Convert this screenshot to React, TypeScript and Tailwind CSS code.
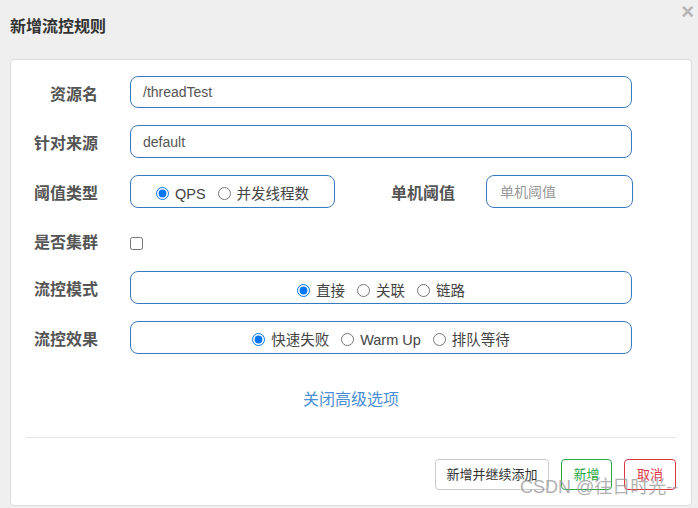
import React from "react";

const font = { fontFamily: '"Liberation Sans", "Noto Sans CJK SC", sans-serif' };

function Label({ children }: { children: React.ReactNode }) {
  return (
    <div className="w-[87px] shrink-0 pt-[5px] text-right text-[16px] font-bold text-[#555] leading-none">
      {children}
    </div>
  );
}

function Radio({ name, label, checked }: { name: string; label: string; checked?: boolean }) {
  return (
    <label className="flex items-center text-[14.5px] text-[#444] leading-none">
      <input
        type="radio"
        name={name}
        defaultChecked={checked}
        className="m-0 mb-[2px] h-[13px] w-[13px] accent-[#0075ff]"
      />
      <span className="ml-[6px]">{label}</span>
    </label>
  );
}

export default function App() {
  return (
    <div className="relative h-[508px] w-[698px] overflow-hidden bg-[#efefef]" style={font}>
      <div className="flex h-[54px] items-center px-[10px]">
        <div className="text-[16px] font-bold text-[#333]">新增流控规则</div>
      </div>
      <div className="absolute right-[4px] top-[1px] text-[22px] font-bold leading-none text-[#b5b5b5]">
        ×
      </div>

      <div className="ml-[10px] mt-[5px] flex h-[447px] w-[682px] flex-col rounded-[4px] border border-[#dcdcdc] bg-white">
        {/* row 1 */}
        <div className="mt-[16px] flex h-[32px] items-center">
          <Label>资源名</Label>
          <div className="ml-[32px] flex h-[32px] w-[502px] items-center rounded-[8px] border border-[#3a7bbf] pl-[12px] pt-[1px] text-[14px] text-[#555]">
            /threadTest
          </div>
        </div>
        {/* row 2 */}
        <div className="mt-[17px] flex h-[33px] items-center">
          <Label>针对来源</Label>
          <div className="ml-[32px] flex h-[33px] w-[502px] items-center rounded-[8px] border border-[#3a7bbf] pl-[12px] pt-[1px] text-[14px] text-[#555]">
            default
          </div>
        </div>
        {/* row 3 */}
        <div className="mt-[17px] flex h-[33px] items-center">
          <Label>阈值类型</Label>
          <div className="ml-[32px] flex h-[33px] w-[205px] items-center justify-center gap-[12px] rounded-[8px] border border-[#3a7bbf] pt-[5px]">
            <Radio name="grade" label="QPS" checked />
            <Radio name="grade" label="并发线程数" />
          </div>
          <div className="ml-[55px] w-[65px] pt-[5px] text-right text-[16px] font-bold leading-none text-[#555]">
            单机阈值
          </div>
          <div className="ml-[31px] flex h-[33px] w-[147px] items-center rounded-[8px] border border-[#3a7bbf] pl-[13px] pt-[2px] text-[14px] text-[#999]">
            单机阈值
          </div>
        </div>
        {/* row 4 */}
        <div className="mt-[18px] flex h-[34px] items-center">
          <div className="w-[87px] shrink-0 text-right text-[16px] font-bold text-[#555] leading-none">
            是否集群
          </div>
          <input type="checkbox" className="m-0 ml-[32px] h-[13px] w-[13px]" />
        </div>
        {/* row 5 */}
        <div className="mt-[11px] flex h-[33px] items-center">
          <Label>流控模式</Label>
          <div className="ml-[32px] flex h-[33px] w-[502px] items-center justify-center gap-[12px] rounded-[8px] border border-[#3a7bbf] pt-[7px]">
            <Radio name="strategy" label="直接" checked />
            <Radio name="strategy" label="关联" />
            <Radio name="strategy" label="链路" />
          </div>
        </div>
        {/* row 6 */}
        <div className="mt-[17px] flex h-[33px] items-center">
          <Label>流控效果</Label>
          <div className="ml-[32px] flex h-[33px] w-[502px] items-center justify-center gap-[12px] rounded-[8px] border border-[#3a7bbf] pt-[6px]">
            <Radio name="behavior" label="快速失败" checked />
            <Radio name="behavior" label="Warm Up" />
            <Radio name="behavior" label="排队等待" />
          </div>
        </div>
        {/* link */}
        <div className="mt-[33px] flex h-[24px] items-center justify-center pt-[2px] text-[16px] text-[#4a8fd6]">
          关闭高级选项
        </div>
        {/* separator */}
        <div className="mx-[15px] mt-[26px] h-px bg-[#e2e2e2]" />
        {/* buttons */}
        <div className="mr-[15px] mt-[21px] flex justify-end gap-[12px]">
          <div className="flex h-[31px] w-[114px] items-center justify-center rounded-[4px] border border-[#ccc] text-[13px] text-[#333]">
            新增并继续添加
          </div>
          <div className="flex h-[31px] w-[51px] items-center justify-center rounded-[4px] border border-[#28a745] text-[13px] text-[#28a745]">
            新增
          </div>
          <div className="flex h-[31px] w-[52px] items-center justify-center rounded-[4px] border border-[#dc3545] text-[13px] text-[#dc3545]">
            取消
          </div>
        </div>
      </div>

      <div className="absolute left-[520px] top-[478px] text-[18px] leading-none text-[#9b9b9b]/80">
        CSDN @往日时光--
      </div>
    </div>
  );
}
